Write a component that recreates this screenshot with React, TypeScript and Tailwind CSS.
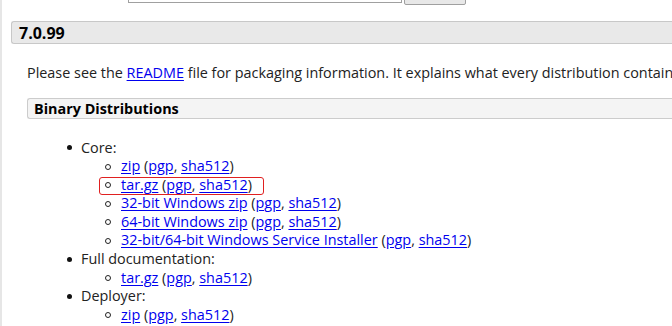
const font = { fontFamily: '"Open Sans", "Liberation Sans", sans-serif' }

function Link({ children }: { children: React.ReactNode }) {
  return <a className="text-[#0000ee] underline underline-offset-2">{children}</a>
}

function Sigs() {
  return (
    <>
      {' '}(<Link>pgp</Link>, <Link>sha512</Link>)
    </>
  )
}

function SubItem({ label, boxed }: { label: string; boxed?: boolean }) {
  return (
    <li className="relative h-[18.6px] flex items-center">
      <span className="absolute left-[-16px] top-[7px] w-[6px] h-[6px] rounded-full border border-[#222]" />
      {boxed && (
        <span className="absolute left-[-22px] top-[2px] w-[165px] h-[18px] border border-[#e02020] rounded-[3px]" />
      )}
      <span>
        <Link>{label}</Link>
        <Sigs />
      </span>
    </li>
  )
}

function Item({ label, children }: { label: string; children: React.ReactNode }) {
  return (
    <li className="relative">
      <div className="relative h-[18.6px] flex items-center">
        <span className="absolute left-[-14px] top-[7px] w-[5px] h-[5px] rounded-full bg-[#111]" />
        {label}
      </div>
      <ul className="pl-[40px]">{children}</ul>
    </li>
  )
}

export default function App() {
  return (
    <div
      className="w-[672px] h-[326px] overflow-hidden bg-white border-l-2 border-[#e6e6e6] text-[14.4px] text-[#222]"
      style={font}
    >
      <div className="flex items-start ml-[126px] -mt-[20px]">
        <div className="w-[274px] h-[23px] border border-[#a0a0a0] bg-white" />
        <div className="ml-[2px] w-[62px] h-[25px] border border-[#a0a0a0] bg-[#e8e8e8] rounded-[2px]" />
      </div>

      <h2 className="mt-[16px] ml-[9px] h-[23px] pl-[7px] flex items-center bg-[#e9e9e9] border border-[#c8c8c8] border-r-0 rounded-l-[3px] text-[16px] font-bold text-black">
        7.0.99
      </h2>

      <p className="mt-[19px] ml-[25px] whitespace-nowrap leading-[19px]">
        Please see the <Link>README</Link> file for packaging information. It explains what every distribution contains.
      </p>

      <h3 className="mt-[16px] ml-[25px] h-[21px] pl-[6px] flex items-center bg-[#f4f4f4] border border-[#cccccc] border-r-0 rounded-l-[3px] text-[14.4px] font-bold text-black">
        Binary Distributions
      </h3>

      <ul className="mt-[19px] pl-[79px] whitespace-nowrap">
        <Item label="Core:">
          <SubItem label="zip" />
          <SubItem label="tar.gz" boxed />
          <SubItem label="32-bit Windows zip" />
          <SubItem label="64-bit Windows zip" />
          <SubItem label="32-bit/64-bit Windows Service Installer" />
        </Item>
        <Item label="Full documentation:">
          <SubItem label="tar.gz" />
        </Item>
        <Item label="Deployer:">
          <SubItem label="zip" />
        </Item>
      </ul>
    </div>
  )
}
